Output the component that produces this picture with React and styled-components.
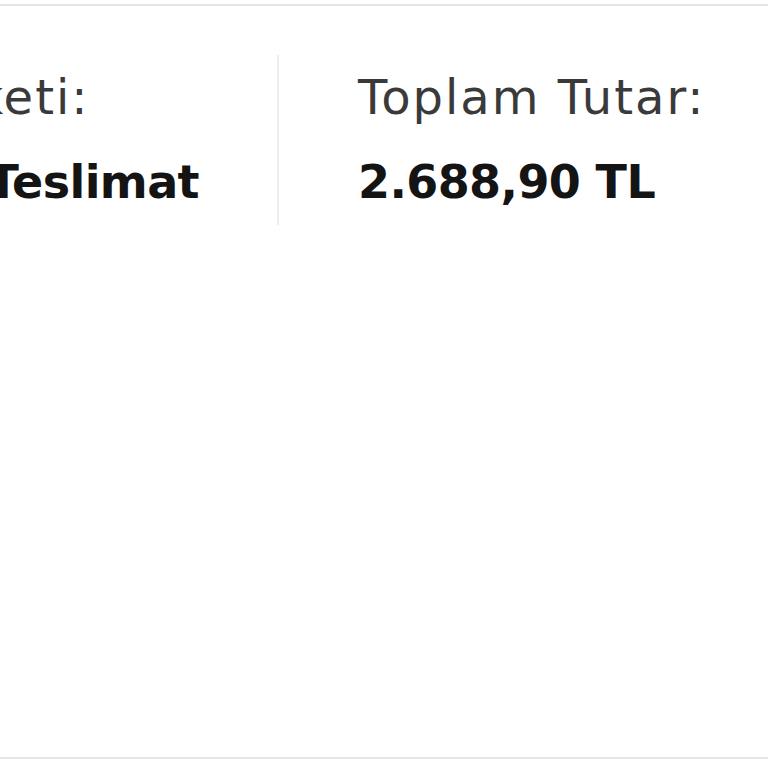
import styled, { createGlobalStyle } from "styled-components";

const Global = createGlobalStyle`
  html, body {
    margin: 0;
    padding: 0;
    background: #ffffff;
  }
  body {
    font-family: "DejaVu Sans", "Noto Sans", sans-serif;
  }
`;

const Page = styled.div`
  height: 768px;
  padding-top: 4px;
  box-sizing: border-box;
  overflow: hidden;
`;

const Card = styled.div`
  height: 755px;
  box-sizing: border-box;
  border-top: 2px solid #e6e6e6;
  border-bottom: 2px solid #e6e6e6;
  background: #fff;
  overflow: hidden;
`;

const Row = styled.div`
  display: flex;
  align-items: flex-start;
  padding-top: 49px;
`;

const Cell = styled.div`
  flex: none;
  width: ${(p) => p.width}px;
  padding: 15px ${(p) => p.gap}px 0 ${(p) => p.pad || 0}px;
  box-sizing: border-box;
  display: flex;
  justify-content: ${(p) => (p.end ? "flex-end" : "flex-start")};
`;

const Stack = styled.div`
  display: flex;
  flex-direction: column;
  white-space: nowrap;
`;

const Label = styled.div`
  font-size: 48px;
  line-height: 54px;
  letter-spacing: 2px;
  color: #3a3a3a;
  font-weight: 400;
`;

const Value = styled.div`
  margin-top: 31px;
  font-size: 46px;
  line-height: 54px;
  letter-spacing: -0.6px;
  color: #141414;
  font-weight: 700;
`;

const Divider = styled.div`
  flex: none;
  width: 2px;
  height: 170px;
  background: #ededed;
`;

const items = [
  { label: "Kargo Paketi:", value: "Standart Teslimat" },
  { label: "Toplam Tutar:", value: "2.688,90 TL" },
];

export default function App() {
  return (
    <Page>
      <Global />
      <Card>
        <Row>
          <Cell width={277} gap={78} end>
            <Stack>
              <Label>{items[0].label}</Label>
              <Value>{items[0].value}</Value>
            </Stack>
          </Cell>
          <Divider />
          <Cell width={489} gap={0} pad={79}>
            <Stack>
              <Label>{items[1].label}</Label>
              <Value>{items[1].value}</Value>
            </Stack>
          </Cell>
        </Row>
      </Card>
    </Page>
  );
}
